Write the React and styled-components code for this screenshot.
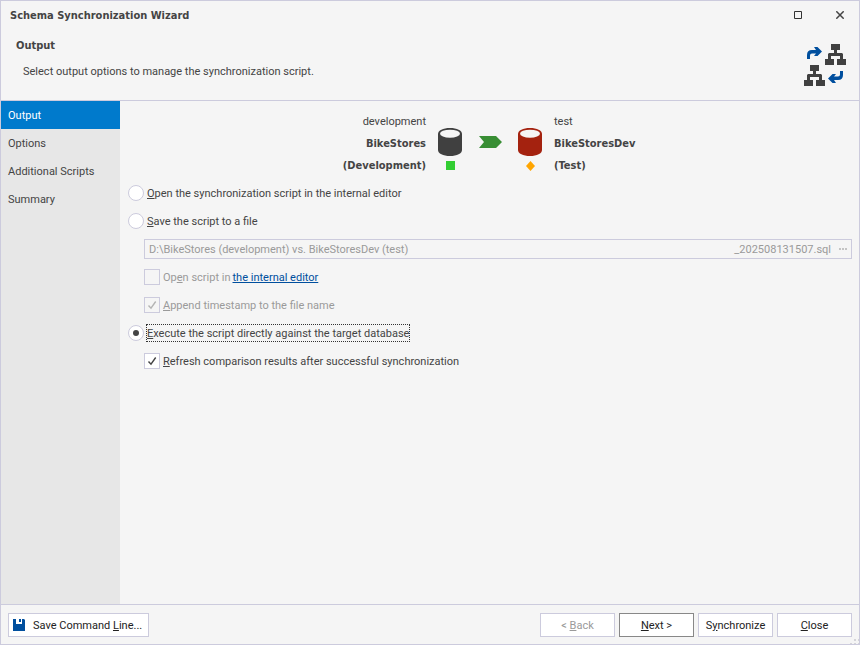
import React, { useState } from 'react';
import styled, { createGlobalStyle, ThemeProvider } from 'styled-components';

const theme = {
  text: '#444444',
  disabled: '#9a9a9a',
  border: '#cccbdd',
  surface: '#f5f5f5',
  sidebar: '#e7e7e7',
  accent: '#007acc',
  link: '#004f9e'
};

const steps = ['Output', 'Options', 'Additional Scripts', 'Summary'];

const App = () => {
  const [step, setStep] = useState('Output');
  const [mode, setMode] = useState('execute');
  const [refresh, setRefresh] = useState(true);
  const toFile = mode === 'save';

  return (
    <ThemeProvider theme={theme}>
      <GlobalStyle />
      <Window>
        <TitleBar>
          <h1>Schema Synchronization Wizard</h1>
          <WindowControls>
            <WindowButton aria-label='Maximize'>
              <MaximizeIcon />
            </WindowButton>
            <WindowButton aria-label='Close window'>
              <CrossIcon />
            </WindowButton>
          </WindowControls>
        </TitleBar>
        <Header>
          <HeaderText>
            <h2>Output</h2>
            <p>Select output options to manage the synchronization script.</p>
          </HeaderText>
          <SchemaIcon />
        </Header>
        <Body>
          <Sidebar>
            {steps.map(name => (
              <StepButton
                key={name}
                $active={name === step}
                onClick={() => setStep(name)}
              >
                {name}
              </StepButton>
            ))}
          </Sidebar>
          <Main>
            <Databases>
              <DatabaseText $right>
                <span>development</span>
                <strong>BikeStores</strong>
                <strong>(Development)</strong>
              </DatabaseText>
              <Flow>
                <DatabaseMark>
                  <DatabaseIcon color='#404040' />
                  <svg width='10' height='10'>
                    <path d='M1 0h9v9H1z' fill='#32cd32' />
                  </svg>
                </DatabaseMark>
                <ArrowIcon />
                <DatabaseMark>
                  <DatabaseIcon color='#a4220f' />
                  <svg width='10' height='10'>
                    <path d='M5.500 0L10 5l-4.500 5L1 5z' fill='#ffa500' />
                  </svg>
                </DatabaseMark>
              </Flow>
              <DatabaseText>
                <span>test</span>
                <strong>BikeStoresDev</strong>
                <strong>(Test)</strong>
              </DatabaseText>
            </Databases>

            <Row>
              <Radio
                id='open'
                name='mode'
                checked={mode === 'open'}
                onChange={() => setMode('open')}
              />
              <Label htmlFor='open'>
                <u>O</u>pen the synchronization script in the internal editor
              </Label>
            </Row>
            <Row>
              <Radio
                id='save'
                name='mode'
                checked={toFile}
                onChange={() => setMode('save')}
              />
              <Label htmlFor='save'>
                <u>S</u>ave the script to a file
              </Label>
            </Row>
            <Row $nested>
              <FileField>
                <input
                  aria-label='Script file'
                  defaultValue='D:\BikeStores (development) vs. BikeStoresDev (test)'
                  disabled={!toFile}
                />
                <span>_202508131507.sql</span>
                <button aria-label='Browse' disabled={!toFile}>
                  <DotsIcon />
                </button>
              </FileField>
            </Row>
            <Row $nested>
              <CheckBox id='openScript' disabled={!toFile} />
              <Label htmlFor='openScript' $disabled={!toFile}>
                Op<u>e</u>n script in
              </Label>
              <Link href='#editor'>the internal editor</Link>
            </Row>
            <Row $nested>
              <CheckBox id='timestamp' defaultChecked disabled={!toFile} />
              <Label htmlFor='timestamp' $disabled={!toFile}>
                <u>A</u>ppend timestamp to the file name
              </Label>
            </Row>
            <Row>
              <Radio
                id='execute'
                name='mode'
                checked={mode === 'execute'}
                onChange={() => setMode('execute')}
              />
              <Label htmlFor='execute' $focused={mode === 'execute'}>
                <u>E</u>xecute the script directly against the target database
              </Label>
            </Row>
            <Row $nested>
              <CheckBox
                id='refresh'
                checked={refresh}
                onChange={() => setRefresh(!refresh)}
              />
              <Label htmlFor='refresh'>
                <u>R</u>efresh comparison results after successful
                synchronization
              </Label>
            </Row>
          </Main>
        </Body>
        <Footer>
          <Button $wide>
            <SaveIcon />
            <span>
              Save Command <u>L</u>ine...
            </span>
          </Button>
          <ButtonGroup>
            <Button disabled>
              <span>
                &lt; <u>B</u>ack
              </span>
            </Button>
            <Button $primary>
              <span>
                <u>N</u>ext &gt;
              </span>
            </Button>
            <Button>
              <span>
                S<u>y</u>nchronize
              </span>
            </Button>
            <Button>
              <span>
                <u>C</u>lose
              </span>
            </Button>
          </ButtonGroup>
          <Grip />
        </Footer>
      </Window>
    </ThemeProvider>
  );
};

export default App;

const Radio = props => (
  <Tick $round>
    <input type='radio' {...props} />
    <svg viewBox='0 0 14 14'>
      <circle cx='7' cy='7' r='3' fill='currentColor' />
    </svg>
  </Tick>
);

const CheckBox = props => (
  <Tick>
    <input type='checkbox' {...props} />
    <svg viewBox='0 0 14 14'>
      <path
        d='M3.5 7.5L6 10.2 10.7 3.5'
        fill='none'
        stroke='currentColor'
        strokeWidth='1.4'
      />
    </svg>
  </Tick>
);

const MaximizeIcon = () => (
  <svg width='8' height='8'>
    <path d='M.5.5h7v7h-7z' fill='none' stroke='#333' />
  </svg>
);

const CrossIcon = () => (
  <svg width='8' height='8'>
    <path d='M.3.3l7.4 7.4M7.7.3L.3 7.7' stroke='#444' strokeWidth='1.5' />
  </svg>
);

const treePath =
  'M6 0h9v6h-3v3h5l1 1v5h3v6h-9v-6h3v-3H6v3h3v6H0v-6h3v-5l1-1h5V6H6z';

const turnPath =
  'M0 12V8q0-5 5-5h4L7 0h3.500L15 4.500 10.500 9H7l2-2.500H5Q3 6.500 3 8.500V12z';

const SchemaIcon = () => (
  <svg width='42' height='42'>
    <path d={treePath} fill='#404040' transform='translate(21 0)' />
    <path d={treePath} fill='#404040' transform='translate(0 21)' />
    <path d={turnPath} fill='#004f9e' transform='translate(3 3)' />
    <path d={turnPath} fill='#004f9e' transform='translate(39 39) rotate(180)' />
  </svg>
);

const DatabaseIcon = ({ color }) => (
  <svg width='24' height='28'>
    <path
      d='M0 6C0 2.500 5 0 12 0s12 2.500 12 6v16c0 3.500-5 6-12 6S0 25.500 0 22z'
      fill={color}
    />
    <ellipse cx='12' cy='5.700' rx='10' ry='4' fill='#f5f5f5' />
  </svg>
);

const ArrowIcon = () => (
  <svg width='26' height='12'>
    <path d='M2 0h17l6 6-6 6H2l5-6z' fill='#388e34' />
  </svg>
);

const DotsIcon = () => (
  <svg width='8' height='2'>
    <path d='M0 0h2v2H0zM3 0h2v2H3zM6 0h2v2H6z' fill='#c4c4c4' />
  </svg>
);

const SaveIcon = () => (
  <svg width='12' height='12'>
    <path d='M0 0h3v5h6V0h2l1 1v11H0z' fill='#004f9e' />
    <path d='M6 0h2v3H6z' fill='#004f9e' />
  </svg>
);

const GripIcon = ({ className }) => (
  <svg className={className} width='9' height='5'>
    <path d='M4 0h2v2H4zM8 0h1v2H8zM0 4h2v1H0zM4 4h2v1H4zM8 4h1v1H8z' fill='#d4d4d9' />
  </svg>
);

const GlobalStyle = createGlobalStyle`
  * {
    box-sizing: border-box;
    margin: 0;
    padding: 0;
  }

  body,
  button,
  input {
    font-family: Tahoma, Roboto, sans-serif;
    font-size: 11px;
    line-height: 16px;
    color: #444444;
  }

  h1,
  h2,
  strong {
    font-family: Tahoma, 'DejaVu Sans Condensed', 'DejaVu Sans', sans-serif;
    font-size: 11px;
    line-height: 14px;
  }

  svg {
    display: block;
    flex-shrink: 0;
  }

  button {
    border: none;
    background: none;
  }
`;

const Window = styled.div`
  display: flex;
  flex-direction: column;
  min-height: 100vh;
  border: 1px solid ${({ theme }) => theme.border};
  background-color: ${({ theme }) => theme.surface};
`;

const TitleBar = styled.div`
  display: flex;
  justify-content: space-between;
  align-items: center;
  height: 30px;
  padding-left: 9px;
`;

const WindowControls = styled.div`
  display: flex;
  align-self: flex-start;
`;

const WindowButton = styled.button`
  display: flex;
  justify-content: center;
  align-items: center;
  width: 46px;
  height: 28px;

  &:last-child {
    width: 38px;
  }

  &:hover {
    background-color: ${({ theme }) => theme.sidebar};
  }
`;

const Header = styled.header`
  display: flex;
  justify-content: space-between;
  align-items: flex-end;
  height: 70px;
  padding: 0 13px 14px 15px;
  border-bottom: 1px solid ${({ theme }) => theme.border};
`;

const HeaderText = styled.div`
  padding-bottom: 6px;

  p {
    padding: 11px 0 0 7px;
  }
`;

const Body = styled.div`
  display: flex;
  flex-grow: 1;
`;

const Sidebar = styled.nav`
  flex-shrink: 0;
  width: 119px;
  background-color: ${({ theme }) => theme.sidebar};
`;

const StepButton = styled.button`
  display: block;
  width: 100%;
  height: 28px;
  padding: 2px 0 0 7px;
  text-align: left;
  color: ${({ theme, $active }) => ($active ? 'white' : theme.text)};
  background-color: ${({ theme, $active }) =>
    $active ? theme.accent : 'transparent'};
`;

const Main = styled.main`
  flex-grow: 1;
  padding: 9px 7px 0 8px;
`;

const Databases = styled.div`
  display: grid;
  grid-template-columns: 1fr 104px 1fr;
  grid-gap: 12px;
  margin-bottom: 3px;
`;

const DatabaseText = styled.div`
  display: flex;
  flex-direction: column;
  text-align: ${({ $right }) => ($right ? 'right' : 'left')};

  & > * {
    height: 22px;
    line-height: 24px;
  }
`;

const Flow = styled.div`
  display: flex;
  justify-content: space-between;
  padding-top: 18px;

  & > svg {
    margin-top: 8px;
  }
`;

const DatabaseMark = styled.div`
  display: flex;
  flex-direction: column;
  align-items: center;
  gap: 5px;
`;

const Row = styled.div`
  display: flex;
  align-items: center;
  height: 28px;
  padding-left: ${({ $nested }) => ($nested ? '16px' : '0')};
`;

const Tick = styled.span`
  display: grid;
  flex-shrink: 0;
  width: 16px;
  height: 16px;
  margin-right: 2px;

  & > * {
    grid-area: 1 / 1;
  }

  input {
    appearance: none;
    width: 16px;
    height: 16px;
    border: 1px solid ${({ theme }) => theme.border};
    border-radius: ${({ $round }) => ($round ? '50%' : '0')};
    background-color: white;
  }

  input:disabled {
    background-color: ${({ theme }) => theme.surface};
  }

  svg {
    width: 14px;
    height: 14px;
    margin: 1px;
    pointer-events: none;
    visibility: hidden;
  }

  input:checked + svg {
    visibility: visible;
  }

  input:disabled + svg {
    color: #b4b4b4;
  }
`;

const Label = styled.label`
  height: 18px;
  line-height: 18px;
  border: 1px dotted ${({ $focused }) => ($focused ? '#333' : 'transparent')};
  color: ${({ theme, $disabled }) => ($disabled ? theme.disabled : theme.text)};
`;

const Link = styled.a`
  height: 16px;
  line-height: 18px;
  margin-left: 1px;
  color: ${({ theme }) => theme.link};
`;

const FileField = styled.div`
  display: flex;
  align-items: center;
  flex-grow: 1;
  height: 20px;
  padding: 0 4px;
  border: 1px solid ${({ theme }) => theme.border};
  color: ${({ theme }) => theme.disabled};

  input {
    flex-grow: 1;
    padding-top: 2px;
    border: none;
    background: none;
    color: ${({ theme }) => theme.disabled};
  }

  span {
    padding-top: 2px;
  }

  button {
    padding-left: 8px;
  }
`;

const Footer = styled.footer`
  position: relative;
  display: flex;
  justify-content: space-between;
  height: 40px;
  padding: 8px 7px 0;
  border-top: 1px solid ${({ theme }) => theme.border};
`;

const ButtonGroup = styled.div`
  display: flex;
  gap: 4px;
`;

const Button = styled.button`
  display: flex;
  justify-content: ${({ $wide }) => ($wide ? 'flex-start' : 'center')};
  align-items: center;
  gap: 8px;
  width: ${({ $wide }) => ($wide ? '141px' : '75px')};
  height: 24px;
  padding-left: ${({ $wide }) => ($wide ? '4px' : '0')};
  white-space: nowrap;
  border: 1px solid
    ${({ theme, $primary }) => ($primary ? '#888888' : theme.border)};
  background-color: white;
  color: #222222;

  span {
    padding-top: 2px;
  }

  &:disabled {
    color: ${({ theme }) => theme.disabled};
  }
`;

const Grip = styled(GripIcon)`
  position: absolute;
  right: 0;
  bottom: 0;
`;
